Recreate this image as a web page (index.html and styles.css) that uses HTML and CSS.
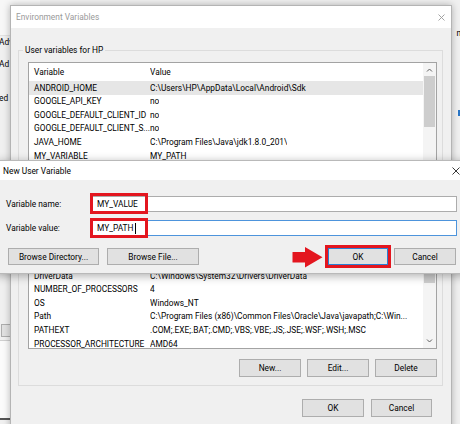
FILE: index.html
```html
<!DOCTYPE html>
<html lang="en">
<head>
<meta charset="utf-8">
<title>New User Variable</title>
<link rel="stylesheet" href="styles.css">
</head>
<body>
<div class="desktop">
  <div class="sysprops">
    <div class="sp-left">
      <div class="sp-top"></div>
      <div class="sp-text l1">Adv</div>
      <div class="sp-text l2">Ad</div>
      <div class="sp-text l3">ed</div>
      <div class="sp-btn"></div>
      <div class="sp-white"></div>
    </div>
    <div class="sp-right">
      <div class="sp-rtext">n</div>
      <div class="sp-blue"></div>
    </div>
  </div>

  <div class="win env">
    <div class="titlebar inactive">
      <span class="title">Environment Variables</span>
      <svg class="close" width="7" height="7" viewBox="0 0 7 7"><path d="M0.5 0.5L6.5 6.5M6.5 0.5L0.5 6.5" stroke="#9a9a9a" stroke-width="0.9"/></svg>
    </div>
    <div class="env-body">
      <fieldset class="group user-group">
        <legend>User variables for HP</legend>
        <div class="list user-list">
          <div class="list-main">
            <div class="list-head"><span class="c1">Variable</span><span class="c2">Value</span></div>
            <div class="rows">
              <div class="row sel"><span class="c1">ANDROID_HOME</span><span class="c2">C:\Users\HP\AppData\Local\Android\Sdk</span></div>
              <div class="row"><span class="c1">GOOGLE_API_KEY</span><span class="c2">no</span></div>
              <div class="row"><span class="c1">GOOGLE_DEFAULT_CLIENT_ID</span><span class="c2">no</span></div>
              <div class="row"><span class="c1">GOOGLE_DEFAULT_CLIENT_S...</span><span class="c2">no</span></div>
              <div class="row"><span class="c1">JAVA_HOME</span><span class="c2">C:\Program Files\Java\jdk1.8.0_201\</span></div>
              <div class="row"><span class="c1">MY_VARIABLE</span><span class="c2">MY_PATH</span></div>
            </div>
          </div>
          <div class="scrollbar">
            <svg class="arrow" width="13" height="14" viewBox="0 0 13 14"><path d="M4 8.5L6.5 6L9 8.5" fill="none" stroke="#606060" stroke-width="1"/></svg>
            <div class="thumb user-thumb"></div>
          </div>
        </div>
        <div class="btn-row group-btns covered"></div>
      </fieldset>

      <fieldset class="group sys-group">
        <legend class="covered-legend"></legend>
        <div class="list sys-list">
          <div class="list-main">
            <div class="list-head"></div>
            <div class="rows sys-rows">
              <div class="row"></div>
              <div class="row"><span class="c1">DriverData</span><span class="c2">C:\Windows\System32\Drivers\DriverData</span></div>
              <div class="row"><span class="c1">NUMBER_OF_PROCESSORS</span><span class="c2">4</span></div>
              <div class="row"><span class="c1">OS</span><span class="c2">Windows_NT</span></div>
              <div class="row"><span class="c1">Path</span><span class="c2">C:\Program Files (x86)\Common Files\Oracle\Java\javapath;C:\Win...</span></div>
              <div class="row"><span class="c1">PATHEXT</span><span class="c2">.COM;.EXE;.BAT;.CMD;.VBS;.VBE;.JS;.JSE;.WSF;.WSH;.MSC</span></div>
              <div class="row"><span class="c1">PROCESSOR_ARCHITECTURE</span><span class="c2">AMD64</span></div>
            </div>
          </div>
          <div class="scrollbar">
            <div class="thumb sys-thumb"></div>
            <svg class="arrow" width="13" height="14" viewBox="0 0 13 14"><path d="M4 5.5L6.5 8L9 5.5" fill="none" stroke="#606060" stroke-width="1"/></svg>
          </div>
        </div>
        <div class="btn-row group-btns sys-btns">
          <button class="btn w62">New...</button>
          <button class="btn w62">Edit...</button>
          <button class="btn w62">Delete</button>
        </div>
      </fieldset>

      <div class="btn-row main-btns">
        <button class="btn w62">OK</button>
        <button class="btn w61">Cancel</button>
      </div>
    </div>
  </div>

  <div class="win newvar">
    <div class="titlebar active">
      <span class="title">New User Variable</span>
      <svg class="close" width="8" height="8" viewBox="0 0 8 8"><path d="M0.5 0.5L7.5 7.5M7.5 0.5L0.5 7.5" stroke="#222" stroke-width="0.9"/></svg>
    </div>
    <div class="nv-body">
      <div class="field-row">
        <label class="field-label">Variable name:</label>
        <div class="input">
          <span class="input-text">MY_VALUE</span>
          <span class="mark mark-name"></span>
        </div>
      </div>
      <div class="field-row second">
        <label class="field-label">Variable value:</label>
        <div class="input focused">
          <span class="input-text">MY_PATH</span><span class="caret"></span>
          <span class="mark mark-value"></span>
        </div>
      </div>
      <div class="nv-buttons">
        <div class="nv-left">
          <button class="btn w91">Browse Directory...</button>
          <button class="btn w92">Browse File...</button>
        </div>
        <div class="nv-right">
          <div class="ok-wrap">
            <svg class="pointer" width="31" height="22" viewBox="0 0 31 22"><path d="M0.5 6.5Q0 6 1 6H13V1L30.5 11.2L13 21.5V16.5H1Q0 16.5 0.5 15.5Z" fill="#e3161f"/></svg>
            <button class="btn w60 default">OK</button>
            <span class="mark mark-ok"></span>
          </div>
          <button class="btn w62">Cancel</button>
        </div>
      </div>
    </div>
  </div>
</div>
</body>
</html>
```

FILE: styles.css
```css
* { box-sizing: border-box; }
html, body { margin: 0; padding: 0; }
body {
  width: 460px;
  height: 424px;
  overflow: hidden;
  font-family: Roboto, "Noto Sans", sans-serif;
  font-size: 8.35px;
  color: #000;
  background: #f0f0f0;
}
.desktop {
  position: relative;
  width: 460px;
  height: 424px;
  overflow: hidden;
  background: #f0f0f0;
}

/* background System Properties window */
.sysprops {
  display: flex;
  justify-content: space-between;
  height: 100%;
}
.sp-left { width: 40px; display: flex; flex-direction: column; }
.sp-top { height: 36px; background: #f7f7f7; border-bottom: 1px solid #e2e2e2; flex: none; }
.sp-text { line-height: 13px; white-space: nowrap; margin-left: -1px; flex: none; }
.l2 { margin-top: 9px; }
.l3 { margin-top: 21px; }
.sp-btn {
  margin-top: 219px;
  height: 13px;
  width: 14px;
  margin-left: 1px;
  background: #e1e1e1;
  border: 1px solid #adadad;
  flex: none;
}
.sp-white {
  margin-top: 3px;
  height: 80px;
  border-top: 1px solid #cfcfcf;
  border-bottom: 2px solid #555;
  background: #fbfbfb;
  flex: none;
}
.sp-right { width: 8px; display: flex; flex-direction: column; align-items: flex-end; }
.sp-rtext { margin-top: 27px; line-height: 12px; margin-right: -1px; }
.sp-blue { margin-top: 71px; width: 2px; height: 6px; background: #2a76c6; }

/* generic window */
.win {
  position: absolute;
  background: #f0f0f0;
  display: flex;
  flex-direction: column;
}
.titlebar {
  display: flex;
  align-items: center;
  justify-content: space-between;
  background: #fff;
  flex: none;
}
.titlebar.inactive { color: #9a9a9a; }
.close { display: block; }

/* Environment Variables dialog */
.env {
  left: 10px;
  top: 5px;
  width: 442px;
  height: 440px;
  border: 1px solid #b4b4b4;
  box-shadow: 0 0 7px rgba(0, 0, 0, 0.28);
}
.env .titlebar { height: 22px; padding: 0 6px 0 5px; }
.env-body {
  display: flex;
  flex-direction: column;
  padding: 16px 8px 0 7px;
}
.group {
  margin: 0;
  border: 1px solid #dcdcdc;
  padding: 0 5px 0 9px;
  min-width: 0;
}
.group legend {
  padding: 0 2px;
  margin-left: -5px;
  line-height: 13px;
}
.group legend.covered-legend { height: 13px; width: 0; padding: 0; }
.list {
  display: flex;
  background: #fff;
  border: 1px solid #a3a3a3;
  margin-top: 5px;
  overflow: hidden;
}
.user-list { height: 125px; }
.sys-list { height: 111px; }
.list-main { flex: 1; min-width: 0; display: flex; flex-direction: column; }
.list-head {
  display: flex;
  height: 18px;
  align-items: center;
  flex: none;
}
.rows { display: flex; flex-direction: column; }
.sys-rows { margin-top: -1.5px; }
.row {
  display: flex;
  height: 13.55px;
  align-items: center;
  flex: none;
  white-space: nowrap;
}
.row.sel { background: #e6e6e6; }
.c1 { width: 121px; padding-left: 5px; flex: none; overflow: hidden; }
.c2 { padding-left: 0; overflow: hidden; }
.scrollbar {
  width: 13px;
  flex: none;
  background: #f4f4f4;
  display: flex;
  flex-direction: column;
}
.scrollbar .arrow { display: block; flex: none; }
.thumb { background: #cdcdcd; margin: 0 1px; flex: none; }
.user-thumb { height: 51px; margin-top: -1px; }
.sys-thumb { height: 44px; }
.sys-list .scrollbar { justify-content: space-between; }

.btn-row { display: flex; gap: 6px; }
.group-btns { justify-content: flex-end; margin-top: 8px; padding-bottom: 6px; }
.group-btns.covered { height: 24px; }
.sys-btns { margin-top: 10px; padding-bottom: 8px; }
.main-btns { justify-content: flex-end; gap: 7px; margin-top: 13px; padding-right: 11px; }

.btn {
  font: inherit;
  color: #000;
  height: 18px;
  padding: 0;
  margin: 0;
  background: #e1e1e1;
  border: 1px solid #adadad;
  border-radius: 0;
  flex: none;
}
.w60 { width: 60px; }
.w61 { width: 61px; }
.w62 { width: 62px; }
.w91 { width: 91px; }
.w92 { width: 92px; }

/* New User Variable dialog */
.newvar {
  left: -4px;
  top: 160px;
  width: 476px;
  height: 114px;
  border: 1px solid #b9b9b9;
  box-shadow: 0 2px 9px rgba(0, 0, 0, 0.32);
}
.newvar .titlebar { height: 19px; padding: 0 11px 0 6px; }
.nv-body {
  display: flex;
  flex-direction: column;
  padding: 16px 14px 0 9px;
}
.field-row { display: flex; align-items: center; }
.field-row.second { margin-top: 8px; }
.field-label { width: 85px; flex: none; }
.input {
  position: relative;
  flex: 1;
  height: 16px;
  background: #fff;
  border: 1px solid #acacac;
  display: flex;
  align-items: center;
  padding-left: 5px;
}
.input.focused { border-color: #4d94dc; }
.caret { width: 1px; height: 11px; background: #000; margin-left: 1px; }
.mark {
  position: absolute;
  border: 3px solid #e3161f;
  pointer-events: none;
}
.mark-name { left: -2px; top: -4px; width: 58px; height: 21px; }
.mark-value { left: -2px; top: -3px; width: 58px; height: 20px; }

.nv-buttons {
  display: flex;
  justify-content: space-between;
  margin-top: 12px;
  padding-left: 2px;
}
.nv-left, .nv-right { display: flex; gap: 8px; }
.nv-right { gap: 6px; padding-right: 1px; }
.nv-buttons .btn { height: 17px; }
.ok-wrap { position: relative; display: flex; }
.btn.default { border-color: #2b7fd4; }
.mark-ok { left: -3px; top: -3px; right: -3px; bottom: -3px; }
.pointer { position: absolute; left: -36px; top: -2px; display: block; }
```
